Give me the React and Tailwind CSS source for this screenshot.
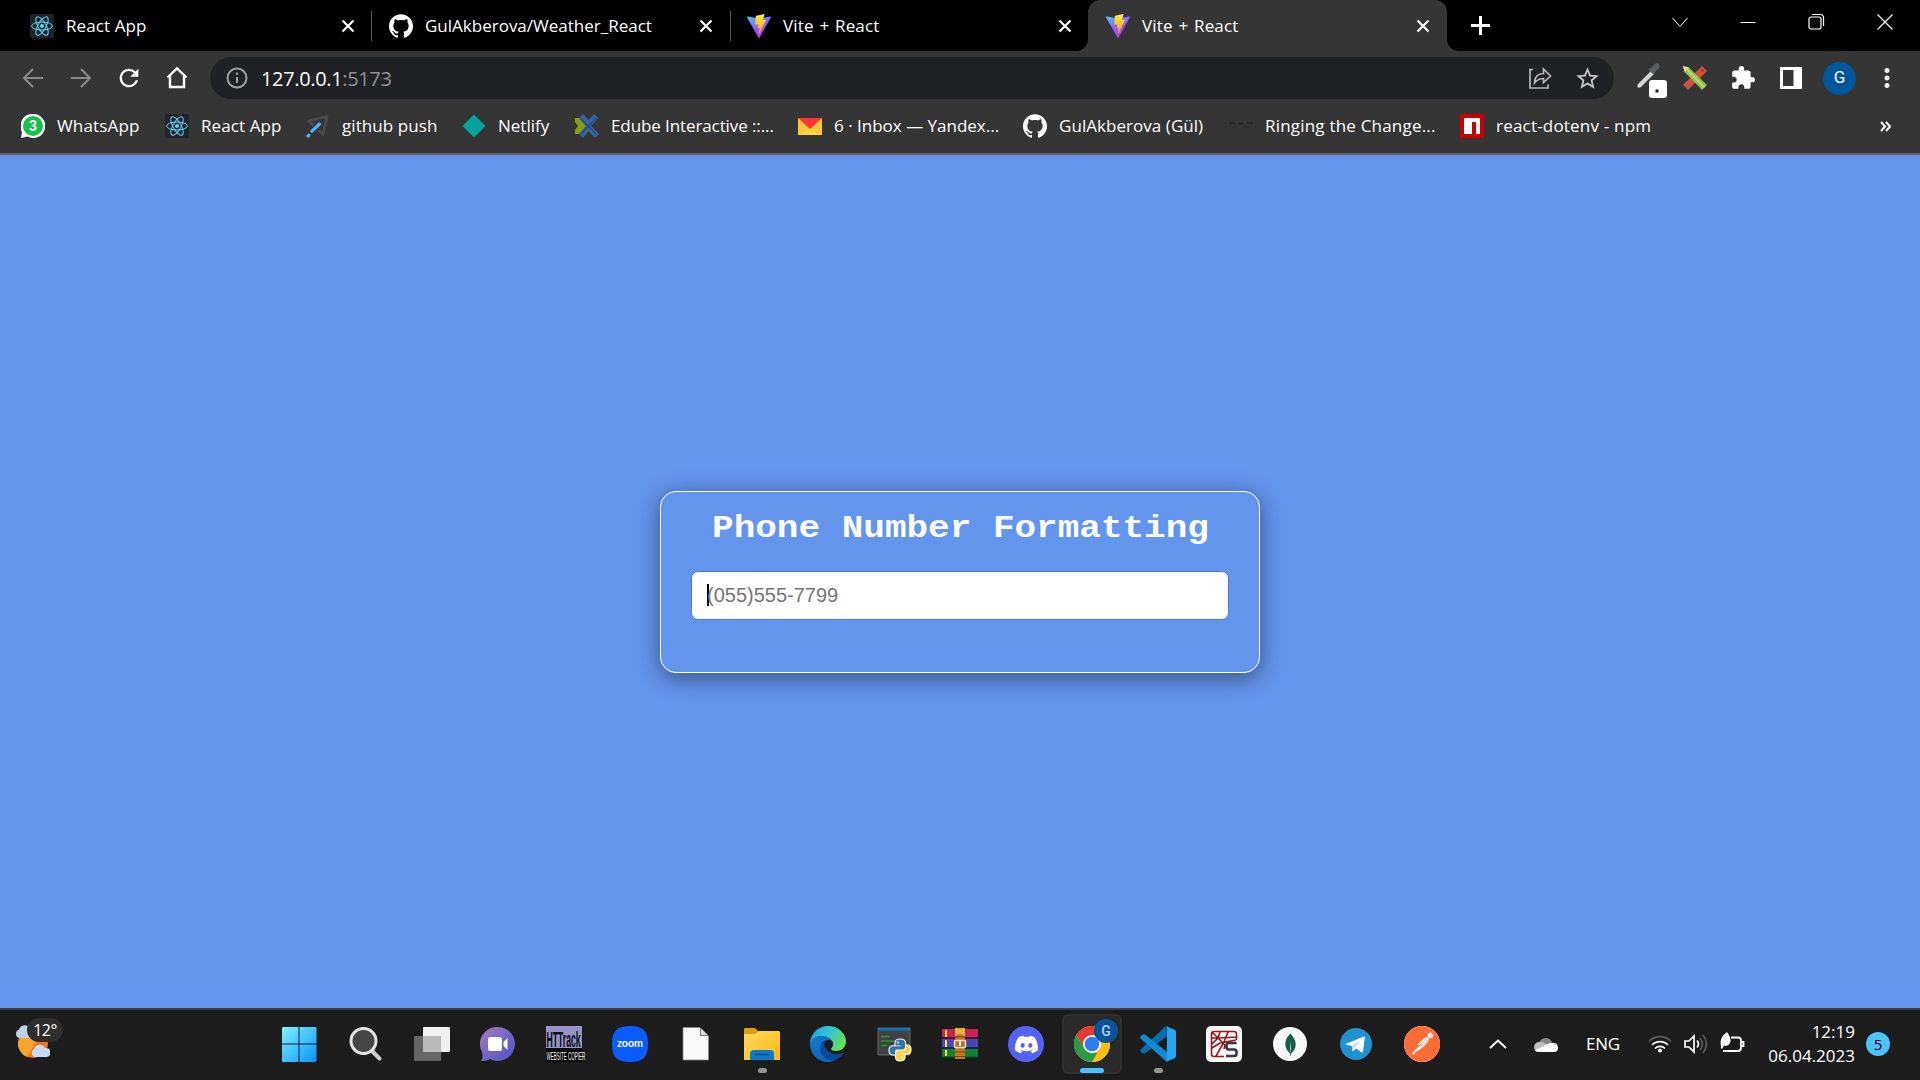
import React from "react";
import { SiDiscord, SiMongodb, SiPostman, SiGithub } from "react-icons/si";
import { MdExtension, MdRefresh, MdStarBorder, MdMoreVert } from "react-icons/md";

const UI = "font-['Open_Sans','Noto_Sans',sans-serif]";

function ReactLogo() {
  return (
    <svg className="size-6 shrink-0" viewBox="0 0 24 24" fill="none">
      <rect width="24" height="24" rx="2" fill="#20232a" />
      <g stroke="#61dafb" strokeWidth="1">
        <ellipse cx="12" cy="12" rx="10.4" ry="4" />
        <ellipse cx="12" cy="12" rx="10.4" ry="4" transform="rotate(60 12 12)" />
        <ellipse cx="12" cy="12" rx="10.4" ry="4" transform="rotate(120 12 12)" />
      </g>
      <circle cx="12" cy="12" r="2" fill="#61dafb" />
    </svg>
  );
}

function ViteLogo({ id }) {
  return (
    <svg className="size-6 shrink-0" viewBox="0 0 24 24">
      <defs>
        <linearGradient id={id + "a"} x1="0" y1="0" x2="0.6" y2="1">
          <stop offset="0" stopColor="#41d1ff" />
          <stop offset="0.5" stopColor="#8a63ff" />
          <stop offset="1" stopColor="#bd34fe" />
        </linearGradient>
        <linearGradient id={id + "b"} x1="0" y1="0" x2="0" y2="1">
          <stop offset="0" stopColor="#ffea83" />
          <stop offset="0.2" stopColor="#ffdd35" />
          <stop offset="1" stopColor="#ffa800" />
        </linearGradient>
      </defs>
      <path d="M23.8 3.5 12.6 23.4a.7.7 0 0 1-1.2 0L.1 3.5a.6.6 0 0 1 .7-.9l11.2 2 11.1-2c.6-.1 1 .4.7.9Z" fill={`url(#${id}a)`} />
      <path d="m17.2.1-8.1 1.6a.3.3 0 0 0-.3.3l-.5 8.4c0 .2.2.4.4.3l2.3-.5c.2 0 .4.1.4.3l-.7 3.3c0 .2.2.4.4.4l1.4-.5c.2 0 .4.2.3.4l-1 5.2c-.1.3.3.5.5.2l.1-.2 6.6-13.2c.1-.2-.1-.5-.3-.4l-2.4.4c-.2 0-.4-.2-.3-.4l1.5-5.3c.1-.2-.1-.4-.3-.3Z" fill={`url(#${id}b)`} />
    </svg>
  );
}

function CloseX() {
  return (
    <svg className="size-4 shrink-0" viewBox="0 0 16 16" stroke="#fff" strokeWidth="2.2">
      <path d="m2.5 2.5 11 11M13.5 2.5l-11 11" />
    </svg>
  );
}

function TabContent({ icon, title, track }) {
  return (
    <>
      {icon}
      <span className={`ml-3 flex-1 whitespace-nowrap text-[17px] leading-6 text-white ${track}`}>{title}</span>
      <CloseX />
    </>
  );
}

function TabStrip() {
  return (
    <div className="flex h-[51px] bg-black">
      <div className="flex w-[372px] items-center pl-[30px]">
        <TabContent icon={<ReactLogo />} title="React App" track="tracking-[0.1px]" />
        <span className="ml-[15px] h-[30px] w-px bg-[#55585c]" />
      </div>
      <div className="flex w-[359px] items-center pl-[17px]">
        <TabContent icon={<SiGithub className="size-6 shrink-0 text-white" />} title="GulAkberova/Weather_React" track="tracking-[0px]" />
        <span className="ml-4 h-[30px] w-px bg-[#55585c]" />
      </div>
      <div className="flex w-[345px] bg-[#353535]">
        <div className="flex flex-1 items-center bg-black pl-4">
          <TabContent icon={<ViteLogo id="v1" />} title="Vite + React" track="tracking-[0.15px] [word-spacing:1.2px]" />
          <span className="w-[3px]" />
        </div>
      </div>
      <div className="w-3 bg-[#353535]"><div className="h-full rounded-br-[12px] bg-black" /></div>
      <div className="bg-black">
        <div className="flex h-full w-[359px] items-center rounded-t-[12px] bg-[#353535] pl-[18px] pr-4">
          <TabContent icon={<ViteLogo id="v2" />} title="Vite + React" track="tracking-[0.15px] [word-spacing:1.2px]" />
        </div>
      </div>
      <div className="flex-1 bg-[#353535]">
        <div className="flex h-full items-center rounded-bl-[12px] bg-black">
          <svg className="ml-6 size-[19px]" viewBox="0 0 19 19" stroke="#fff" strokeWidth="3">
            <path d="M9.5 0v19M0 9.5h19" />
          </svg>
          <div className="ml-auto mr-[27px] flex items-center gap-[52px] pb-[8px]">
            <svg className="size-4" viewBox="0 0 16 16" fill="none" stroke="#fff"><path d="m.5 4 7.500 8.500L15.500 4" /></svg>
            <svg className="size-4" viewBox="0 0 16 16" stroke="#fff"><path d="M.5 8.500h15" /></svg>
            <svg className="size-[17px]" viewBox="0 0 17 17" fill="none" stroke="#fff" strokeWidth="1.200">
              <rect x="1" y="4" width="12" height="12" rx="2" />
              <path d="M4 1.500h8.500a3 3 0 0 1 3 3V13" />
            </svg>
            <svg className="size-4" viewBox="0 0 16 16" stroke="#fff" strokeWidth="1.200"><path d="m.5.5 15 15m0-15-15 15" /></svg>
          </div>
        </div>
      </div>
    </div>
  );
}

function Toolbar() {
  return (
    <div className="flex h-[54px] items-center pl-[21px]">
      <div className="flex w-[189px] items-center gap-6">
        <svg className="size-6" viewBox="0 0 24 24" fill="none" stroke="#8b8b8b" strokeWidth="2"><path d="M22 12H3m9-9-9 9 9 9" /></svg>
        <svg className="size-6" viewBox="0 0 24 24" fill="none" stroke="#8b8b8b" strokeWidth="2"><path d="M2 12h19m-9-9 9 9-9 9" /></svg>
        <MdRefresh className="-mx-0.5 size-[28px] text-white" />
        <svg className="size-6" viewBox="0 0 24 24" fill="none" stroke="#fff" strokeWidth="2.400"><path d="M2.500 11.500 12 2.500l9.500 9M5 10v11h14V10" /></svg>
      </div>
      <div className="flex h-[42px] w-[1404px] items-center rounded-full bg-[#202124] pl-4 pr-[13px]">
        <svg className="size-[22px]" viewBox="0 0 22 22" fill="none" stroke="#9aa0a6" strokeWidth="2"><circle cx="11" cy="11" r="9.500" /><path d="M11 10v6M11 5.500v2.200" /></svg>
        <span className="ml-[13px] mt-px whitespace-nowrap text-[20px] tracking-[-0.35px] text-white">127.0.0.1<span className="text-[#919395]">:5173</span></span>
        <svg className="ml-auto size-6" viewBox="0 0 24 24" fill="none" stroke="#b5b7b9" strokeWidth="1.700"><path d="M5 3.500H2v18.500h18v-3.500M6.500 17c.2-6 3-9.500 9-9.500V3L22.500 10 15.500 16.500V12.500c-4 0-6.500 1.300-9 4.500Z" /></svg>
        <MdStarBorder className="ml-[22px] size-[27px] text-[#c5c7c9]" />
      </div>
      <div className="ml-[21px] flex flex-1 items-center">
        <svg className="mt-1 h-[40px] w-8" viewBox="0 0 32 40">
          <path d="m3 24 13-13 3 3L6 27c-2 2-5 0-3-3Z" fill="#d6d6d6" />
          <path d="m13 9 3-1 4-4c3-2 6 1 4 4l-4 4-1 3Z" fill="#5c5f63" />
          <rect x="14" y="20" width="18" height="18" rx="3" fill="#fff" />
          <rect x="20.500" y="29.500" width="3" height="3" fill="#123" />
        </svg>
        <svg className="ml-4 size-6" viewBox="0 0 24 24">
          <path d="m19 0 5 5L5 24l-5-5Z" fill="#cf4f38" />
          <circle cx="19.500" cy="4.500" r="1" fill="#7d2a1c" />
          <path d="m0 0 6 1.500L24 19l-5 5L1.500 6Z" fill="#8fbe4b" />
          <path d="m4 3.500 17.500 18" stroke="#b8db75" strokeWidth="2" />
          <path d="m0 0 6 1.500L1.500 6Z" fill="#f0d9a0" />
        </svg>
        <MdExtension className="ml-[23px] size-[26px] text-white" />
        <svg className="ml-6 h-[22px] w-[22px]" viewBox="0 0 22 22"><rect width="22" height="22" fill="#fff" /><rect x="3" y="3" width="10.500" height="16" fill="#353535" /></svg>
        <span className="ml-[21px] flex size-[33px] items-center justify-center rounded-full bg-[#01579b] font-['Roboto',sans-serif] text-[17px] text-white">G</span>
        <MdMoreVert className="ml-4 size-[30px] text-white" />
      </div>
    </div>
  );
}

const icon = "size-6 shrink-0";

const bookmarks = [
  {
    t: "WhatsApp", w: "w-[144px]", track: "tracking-[0.15px]",
    i: (
      <svg className={icon} viewBox="0 0 24 24">
        <path d="M12 0a12 12 0 1 1-5.500 22.500L0 24l1-6A12 12 0 0 1 12 0Z" fill="#fff" />
        <circle cx="12" cy="12" r="10" fill="#14c14a" />
        <text x="12" y="17" textAnchor="middle" fontFamily="Roboto" fontWeight="700" fontSize="14" fill="#fff">3</text>
      </svg>
    ),
  },
  { t: "React App", w: "w-[141px]", track: "tracking-[0.1px]", i: <ReactLogo /> },
  {
    t: "github push", w: "w-[156px]", track: "tracking-[0.08px]",
    i: (
      <svg className={icon} viewBox="0 0 24 24" fill="none">
        <path d="M2.500 7 21 2.500 17 20.500Z" stroke="#4c4c4c" strokeWidth="2.800" strokeLinejoin="round" />
        <path d="m8 16 5.500-6" stroke="#353535" strokeWidth="7" />
        <path d="m2 22 .8-.8m3.200-4L13.500 10" stroke="#4bb1f9" strokeWidth="3.200" strokeLinecap="round" />
      </svg>
    ),
  },
  { t: "Netlify", w: "w-[113px]", track: "tracking-[0px]", i: <svg className={icon} viewBox="0 0 24 24"><path d="m12 .5 11.500 11.500L12 23.500.5 12Z" fill="#05a3a0" /></svg> },
  {
    t: "Edube Interactive ::...", w: "w-[223px]", track: "tracking-[-0.1px]",
    i: (
      <svg className={icon} viewBox="0 0 24 24">
        <path d="m0 4 4 0 7 8-7 8H0v-4l3-4-3-4Z" fill="#86a010" />
        <path d="m8 0 5.500 6L19 0l4 4-7 8 8 8-4 4-6.500-7L8 24l-4-4 7-8-7-8Z" fill="#3a63a5" />
        <path d="M6 5 21 20M21 4 6 20" stroke="#24457c" strokeWidth="1.200" />
      </svg>
    ),
  },
  { t: "6 · Inbox — Yandex...", w: "w-[225px]", track: "tracking-[0px]", i: <svg className={icon} viewBox="0 0 24 24"><path d="M0 4h24v17H0Z" fill="#ffd43c" /><path d="m0 4 12 11L0 21Z" fill="#ffc63a" /><path d="M24 4 12 15l12 6Z" fill="#ffc63a" /><path d="M0 4h24L12 15Z" fill="#f33" /></svg> },
  { t: "GulAkberova (Gül)", w: "w-[206px]", track: "tracking-[0.05px]", i: <SiGithub className="size-6 shrink-0 text-white" /> },
  { t: "Ringing the Change...", w: "w-[231px]", track: "tracking-[0.2px]", i: <svg className={icon} viewBox="0 0 24 24" fill="none" stroke="#222"><path d="M0 9h6M18 9h6M10 9.500h4" strokeWidth="1.500" /><path d="M1 9c0 6 8 6 9 0M14 9c1 6 9 6 9 0" stroke="#2b2b2b" /></svg> },
  { t: "react-dotenv - npm", w: "w-[300px]", track: "tracking-[0.2px]", i: <svg className={icon} viewBox="0 0 24 24"><path d="M0 0h24v24H0Z" fill="#c00" /><path d="M4 4h16v16h-4V8h-4v12H4Z" fill="#fff" /></svg> },
];

function Bookmarks() {
  return (
    <div className="flex h-[48px] items-center pb-[6px] pl-[21px]">
      {bookmarks.map((b) => (
        <div key={b.t} className={`flex shrink-0 items-center gap-3 ${b.w}`}>
          {b.i}
          <span className={`whitespace-nowrap text-[17px] leading-6 text-white ${b.track}`}>{b.t}</span>
        </div>
      ))}
      <svg className="ml-auto mr-[29px] h-[11px] w-[11px]" viewBox="0 0 11 11" fill="none" stroke="#fff" strokeWidth="2"><path d="m1 1 4 4.500L1 10M6 1l4 4.500L6 10" /></svg>
    </div>
  );
}

function PhoneCard() {
  return (
    <div className="flex h-[182px] w-[600px] flex-col items-center rounded-[16px] border border-white px-[31px] shadow-[0_5px_25px_rgba(0,0,0,0.45)]">
      <h1 className="mt-[14px] origin-bottom scale-y-[0.88] whitespace-nowrap pl-px font-['Liberation_Mono',monospace] text-[36px] font-bold leading-[41px] text-white">Phone Number Formatting</h1>
      <div className="mt-[24px] flex h-[49px] w-[538px] items-center rounded-[7px] border border-[#4478dc] bg-white pl-[15px]">
        <span className="h-[22px] w-[2px] bg-black" />
        <span className="-ml-[2px] font-['Liberation_Sans',sans-serif] text-[20px] text-[#757575]">(055)555-7799</span>
      </div>
    </div>
  );
}

const big = "size-9";

const apps = [
  { n: "start", i: <svg className={big} viewBox="0 0 36 36"><defs><linearGradient id="win" x1="0" y1="0" x2="1" y2="1"><stop offset="0" stopColor="#7df3ff" /><stop offset="1" stopColor="#0a93ff" /></linearGradient></defs><path d="M1 1h15.500v16.500H-.5V2ZM17.500 1H33.500l1 1v15.500h-17ZM-.5 18.500h17V36H.5l-1-1ZM17.500 18.500h17V35l-1 1H17.500Z" fill="url(#win)" /></svg> },
  { n: "search", i: <svg className={big} viewBox="0 0 36 36"><path d="m24 25 7.500 7.500" stroke="#c9cccf" strokeWidth="4" strokeLinecap="round" /><circle cx="15.500" cy="15" r="12.500" fill="#464646" stroke="#e4e5e6" strokeWidth="3" /></svg> },
  { n: "tasks", i: <svg className={big} viewBox="0 0 36 36"><rect x="9" y="1" width="27" height="25" rx="1" fill="#f1f1f1" /><rect y="10" width="27" height="25" rx="1" fill="#656565" /><path d="M9 10h18v16H9Z" fill="#bababa" /></svg> },
  { n: "chat", i: <svg className={big} viewBox="0 0 36 36"><defs><linearGradient id="chat" x1="0" y1="0" x2="1" y2="1"><stop offset="0" stopColor="#a878c0" /><stop offset="0.5" stopColor="#7467c4" /><stop offset="1" stopColor="#5050c0" /></linearGradient></defs><path d="M18 1a17 17 0 1 1-8 32c-3 2-6 2-9 2 2-3 2-6 1-9A17 17 0 0 1 18 1Z" fill="url(#chat)" /><rect x="8" y="11" width="14" height="14" rx="2.500" fill="#fff" /><path d="m23.500 16 4-4v12l-4-4Z" fill="#fff" /></svg> },
  {
    n: "httrack",
    i: (
      <svg className="size-9 overflow-visible" viewBox="0 0 36 36">
        <path d="M0 0h36v36H0Z" fill="#000" />
        <path d="M0 0h36v22H0Z" fill="#9494c8" />
        <text transform="translate(.5 20.500) scale(.64 1.700)" fontFamily="Liberation Sans" fontWeight="700" fontSize="13.500" fill="#08080c">HTTrack</text>
        <text transform="translate(.5 33.500) scale(.5 1.150)" fontFamily="Liberation Sans" fontSize="9" fill="#fff">WEBSITE COPIER</text>
      </svg>
    ),
  },
  { n: "zoom", i: <svg className={big} viewBox="0 0 36 36"><path d="M18 0C31 0 36 5 36 18s-5 18-18 18S0 31 0 18 5 0 18 0Z" fill="#0b5cff" /><text x="5" y="21" textLength="26" lengthAdjust="spacingAndGlyphs" fontFamily="Lato" fontWeight="700" fontSize="11" fill="#fff">zoom</text></svg> },
  { n: "document", i: <svg className={big} viewBox="0 0 36 36"><path d="M5 1.500h17L30.500 10v24H5Z" fill="#fafafa" stroke="#888" strokeWidth="0.700" /><path d="M22.500 2v7.500H30" fill="#ddd" stroke="#777" /></svg> },
  { n: "explorer", dot: true, i: <svg className={big} viewBox="0 0 36 36"><defs><linearGradient id="fold" x1="0" y1="0" x2="1" y2="1"><stop offset="0" stopColor="#ffdb66" /><stop offset="1" stopColor="#fbb90c" /></linearGradient></defs><path d="M0 3q0-1 1-1h10l4 4v6H0Z" fill="#e09f03" /><path d="M0 8h11l4-3h20l1 1v28H0Z" fill="url(#fold)" /><path d="M6 34v-6q0-4 4-4h16q4 0 4 4v6Z" fill="#0f78c8" /><path d="M11 28.500h14" stroke="#084b86" strokeWidth="1.500" /></svg> },
  { n: "edge", i: <svg className={big} viewBox="0 0 36 36"><defs><linearGradient id="edge" x1="0" y1="0.2" x2="1" y2="0.6"><stop offset="0" stopColor="#1ca4e8" /><stop offset="0.5" stopColor="#35c5d0" /><stop offset="1" stopColor="#65e34d" /></linearGradient><linearGradient id="edgeb" x1="0" y1="0" x2="0.6" y2="1"><stop offset="0" stopColor="#1478cc" /><stop offset="1" stopColor="#0c68c0" /></linearGradient></defs><path d="M18 0c11 0 18 8 18 15 0 6-4 10-10 10-3 0-5-1-5-2s2-2 2-5c0-4-5-8-11-8C5 10 1 15 0 18 0 8 8 0 18 0Z" fill="url(#edge)" /><path d="M0 18c1-6 6-8 11-8 7 0 12 4 12 8 0-3-3-4-5-4-3 0-6 3-6 7 0 8 6 14 13 13-2 1-4 2-7 2C8 36 0 28 0 18Z" fill="url(#edgeb)" /><path d="M18 14c-4 1-4 5-3 7 2 5 8 8 13 7 3 0 4-2 5-1 1 0-2 5-8 7-7 2-15-4-15-11 0-6 4-10 8-9Z" fill="#0b4a99" /><path d="M18 14c2 0 5 1 5 4 0 2-2 3-2 5-4-1-7-6-3-9Z" fill="#1c1c1c" /></svg> },
  { n: "python", i: (
    <span className="relative block size-9">
      <svg className={big} viewBox="0 0 36 36"><path d="M2 2h32v27H2Z" fill="#3f4245" stroke="#777" strokeWidth="0.800" /><path d="M2 2h32v2.500H2Z" fill="#0d74c4" /><path d="M5 10.500h9M5 15h13M5 19.500h6" stroke="#33913a" strokeWidth="1.300" /></svg>
      <svg className="absolute left-[12px] top-[12px] size-6" viewBox="0 0 24 24"><g fill="#fff" stroke="#fff" strokeWidth="2.200"><path d="M12 1.500C8.500 1.500 7.500 3 7.500 5v2.500h5v.8H5C2.500 8.300 1.500 10 1.500 12.500S3 16.500 5 16.500h2v-2.500c0-2 1-2.500 3-2.500h4.500c1.500 0 2.500-1 2.500-2.500V5c0-2.500-1.500-3.500-5-3.500Z" /><path d="M12 22.500c3.500 0 4.500-1.500 4.500-3.500v-2.500h-5v-.8H19c2.500 0 3.500-1.700 3.500-4.200S21 7.500 19 7.500h-1V10c0 2-1.500 2.500-3 2.500h-4.500c-1.500 0-2.500 1-2.500 2.500v4c0 2.500 1 3.500 4 3.500Z" /></g><path d="M12 1.500C8.500 1.500 7.500 3 7.500 5v2.500h5v.8H5C2.500 8.300 1.500 10 1.500 12.500S3 16.500 5 16.500h2v-2.500c0-2 1-2.500 3-2.500h4.500c1.500 0 2.500-1 2.500-2.500V5c0-2.500-1.500-3.500-5-3.500Z" fill="#3674a8" /><path d="M12 22.500c3.500 0 4.500-1.500 4.500-3.500v-2.500h-5v-.8H19c2.500 0 3.500-1.700 3.500-4.200S21 7.500 19 7.500h-1V10c0 2-1.500 2.500-3 2.500h-4.500c-1.500 0-2.500 1-2.500 2.500v4c0 2.500 1 3.500 4 3.500Z" fill="#ffd343" /><circle cx="9.800" cy="4.500" r="1" fill="#fff" /><circle cx="14.200" cy="19.500" r="1" fill="#fff" /></svg>
    </span>
  ) },
  { n: "winrar", i: <svg className={big} viewBox="0 0 36 36"><path d="M0 3h36v10H0Z" fill="#c4264e" /><path d="M0 13h36v10H0Z" fill="#4648b8" /><path d="M0 23h36v9H0Z" fill="#138035" /><path d="M0 11h36v2H0Z" fill="#5c0d24" /><path d="M0 21h36v2H0Z" fill="#232360" /><path d="M0 30.500h36V32H0Z" fill="#08451a" /><path d="M3 4h2v7H3ZM3 14h2v7H3ZM3 24h2v6H3Z" fill="#ffe13a" /><path d="M13 2h10v31H13Z" fill="#c9741f" /><path d="M13 2h10v8q-5-4-10 0Z" fill="#e8b53a" /><path d="M13 11h10M13 26h10M13 30.500h10" stroke="#7c3e0c" /><rect x="12.500" y="14.500" width="11" height="7" rx="1" fill="#b86b22" stroke="#e9e3d5" strokeWidth="1.500" /><path d="M18 15v5" stroke="#fff" strokeWidth="1.800" /></svg> },
  { n: "discord", i: <span className="flex size-9 items-center justify-center rounded-full bg-[#5661f5]"><SiDiscord className="size-[23px] text-white" /></span> },
  { n: "chrome", active: true, i: (
    <span className="relative block size-9">
      <svg className={big} viewBox="0 0 36 36"><circle cx="18" cy="18" r="18" fill="#fbc116" /><path d="M2.400 9A18 18 0 0 1 33.600 9H18L10.200 22.500Z" fill="#e33b2e" /><path d="M2.400 9 10.200 22.500 18 27h7.800L18 36A18 18 0 0 1 2.400 9Z" fill="#2a9a47" /><path d="M18 36 25.800 22.500 25 9h8.600A18 18 0 0 1 18 36Z" fill="#fbc116" /><circle cx="18" cy="18" r="9" fill="#fff" /><circle cx="18" cy="18" r="7.300" fill="#2f7cf0" /></svg>
      <span className="absolute -top-[7px] left-5 flex size-6 items-center justify-center rounded-full bg-[#06559b] font-['Roboto',sans-serif] text-[14px] font-medium text-[#b5d0ea]">G</span>
    </span>
  ) },
  { n: "vscode", dot: true, i: <svg className={big} viewBox="0 0 36 36"><path d="M26 0 1 23q-1.500 1.500 0 3l2 1.500q1 .7 2 0L27 10Z" fill="#0a6cb0" /><path d="M27 36 1 13q-1.500-1.500 0-3l2-1.500q1-.7 2 0L27 26Z" fill="#118ad4" /><path d="M26 0 35 4q1 .6 1 2v24q0 1.400-1 2L26 36q1-1 1-3V3q0-2-1-3Z" fill="#26a5f2" /></svg> },
  { n: "spyder", i: <svg className={big} viewBox="0 0 36 36"><rect width="36" height="36" rx="5" fill="#f8f8f8" /><path d="M18 30.500H8q-2.500 0-2.500-2.500V8Q5.500 5.500 8 5.500h20Q30.500 5.500 30.500 8v6M6 6l13 13M14 6l-2 6-6 6M22 6l-4 10-8 14M5.500 12h8l17-1M6 22l8-5 16-3M19 19l-1 4" stroke="#94191f" strokeWidth="1.600" fill="none" /><path d="M30.500 17H23q-2.500 0-2.500 2.300V21q0 2.500 2.500 2.500h5q2.500 0 2.500 2.500v1.700q0 2.300-2.500 2.300H20" stroke="#33373b" strokeWidth="2.600" fill="none" /></svg> },
  { n: "mongodb", i: <span className="flex size-[34px] items-center justify-center rounded-full bg-[#f8f8f8]"><SiMongodb className="size-[23px] text-[#116149]" /></span> },
  { n: "telegram", i: <svg className={big} viewBox="0 0 36 36"><circle cx="18" cy="18" r="16" fill="#1f92cf" /><path d="M7.500 18 26 10.500q1-.3.800 1L25 25.500q-.4 1.500-2 .6l-5-3.600-2.600 2.600q-1 .8-1-.6l-.6-4.500-5.800-1.500q-1-.5-.5-.5Z" fill="#fff" /><path d="m14 20 9.500-6-7 7.500-.8 3Z" fill="#b9d9ec" /></svg> },
  { n: "postman", i: <span className="flex size-9 items-center justify-center rounded-full bg-white"><SiPostman className="size-9 text-[#ff6c37]" /></span> },
];

function Taskbar() {
  return (
    <div className="flex h-[72px] items-center border-t-2 border-[#3e3e3e] bg-[#1c1c1c] pb-[2px]">
      <div className="relative h-[70px] w-[267px]">
        <svg className="ml-[14px] mt-[15px] size-9" viewBox="0 0 36 36">
          <circle cx="19" cy="19" r="15" fill="#f2761b" />
          <path d="M4 18a15 15 0 0 0 9 15L28 8H12Z" fill="#f6a52c" />
          <path d="M5 14a4.500 4.500 0 0 1 0-8.500 6 6 0 0 1 11-1v9.500Z" fill="#bdd0f2" />
          <path d="M20 33a4.500 4.500 0 0 1 0-8 6 6 0 0 1 11-1 4.600 4.600 0 0 1 2 9Z" fill="#c8daf7" />
        </svg>
        <span className="absolute left-[27px] top-[9px] flex h-6 w-9 items-center justify-center rounded-full bg-[#2d2d2d] text-[16px] tracking-[-0.5px] text-white">12°</span>
      </div>
      <div className="flex">
        {apps.map((a) => (
          <div key={a.n} className="relative flex w-[66px] justify-center">
            <div className={`flex size-[60px] items-center justify-center ${a.active ? "rounded-[6px] border-2 border-[#303030] bg-[#292929]" : ""}`}>{a.i}</div>
            {a.dot && <span className="absolute bottom-px left-[29px] h-[5px] w-[9px] rounded-full bg-[#929292]" />}
            {a.active && <span className="absolute bottom-px left-[21px] h-[5px] w-6 rounded-full bg-[#4cc2ff]" />}
          </div>
        ))}
      </div>
      <div className="flex flex-1 items-center">
        <svg className="ml-[34px] h-[10px] w-[18px]" viewBox="0 0 18 10" fill="none" stroke="#fff" strokeWidth="2"><path d="m1 9 8-7.500L17 9" /></svg>
        <svg className="ml-[27px] h-[18px] w-6" viewBox="0 0 24 18"><path d="M5 8a7 7 0 0 1 13-1l-6 5Z" fill="#858585" /><path d="M5 17a5 5 0 0 1 0-10q4-1 8 3l-7 7Z" fill="#bcbcbc" /><path d="M4 17q-2 0-3-2l15-7q8-1 8 5 0 4-4 4Z" fill="#fff" /></svg>
        <span className="ml-[28px] w-[36px] whitespace-nowrap text-[17px] tracking-[-0.2px] text-white">ENG</span>
        <svg className="ml-[26px] h-[20px] w-[24px]" viewBox="0 0 24 20" fill="none" strokeWidth="1.700"><path d="M1 7.500a15 15 0 0 1 22 0" stroke="#5a5a5a" /><path d="M4 11a11 11 0 0 1 16 0M7 14.500a7 7 0 0 1 10 0" stroke="#fff" /><circle cx="12" cy="16.500" r="2" fill="#fff" /></svg>
        <svg className="ml-3 h-5 w-6" viewBox="0 0 24 20" fill="none" strokeWidth="1.700"><path d="M1 7v6h4l5 5V2L5 7Z" stroke="#fff" /><path d="M13 6.500q3 3.500 0 7" stroke="#fff" /><path d="M16 4q5 6 0 12M19 1q7 9 0 18" stroke="#5a5a5a" /></svg>
        <svg className="-mt-[3px] ml-3 h-[21px] w-[25px]" viewBox="0 0 25 21" fill="none"><path d="M11 5.500h7q3 0 3 3V16q0 3-3 3H3" stroke="#fff" strokeWidth="1.800" /><path d="M22 10h1.500v4H22" stroke="#fff" strokeWidth="1.800" /><path d="M7 0q5 7 3 11-2 4-6 2.500L2 17 .8 16q.7-2-.2-4Q0 5 7 0Z" fill="#fff" /></svg>
        <div className="ml-[20px] w-[90px] whitespace-nowrap text-right text-[17px] leading-6 tracking-[0px] text-white">
          <p>12:19</p>
          <p>06.04.2023</p>
        </div>
        <span className="ml-[11px] flex size-6 items-center justify-center rounded-full bg-[#4cc2ff] text-[15px] text-black">5</span>
      </div>
    </div>
  );
}

export default function App() {
  return (
    <div className={`flex h-[1080px] w-[1920px] flex-col overflow-hidden bg-[#6495ed] ${UI}`}>
      <header className="border-b-2 border-[#606060] bg-[#353535]">
        <TabStrip />
        <Toolbar />
        <Bookmarks />
      </header>
      <main className="flex flex-1 items-center justify-center">
        <PhoneCard />
      </main>
      <Taskbar />
    </div>
  );
}
